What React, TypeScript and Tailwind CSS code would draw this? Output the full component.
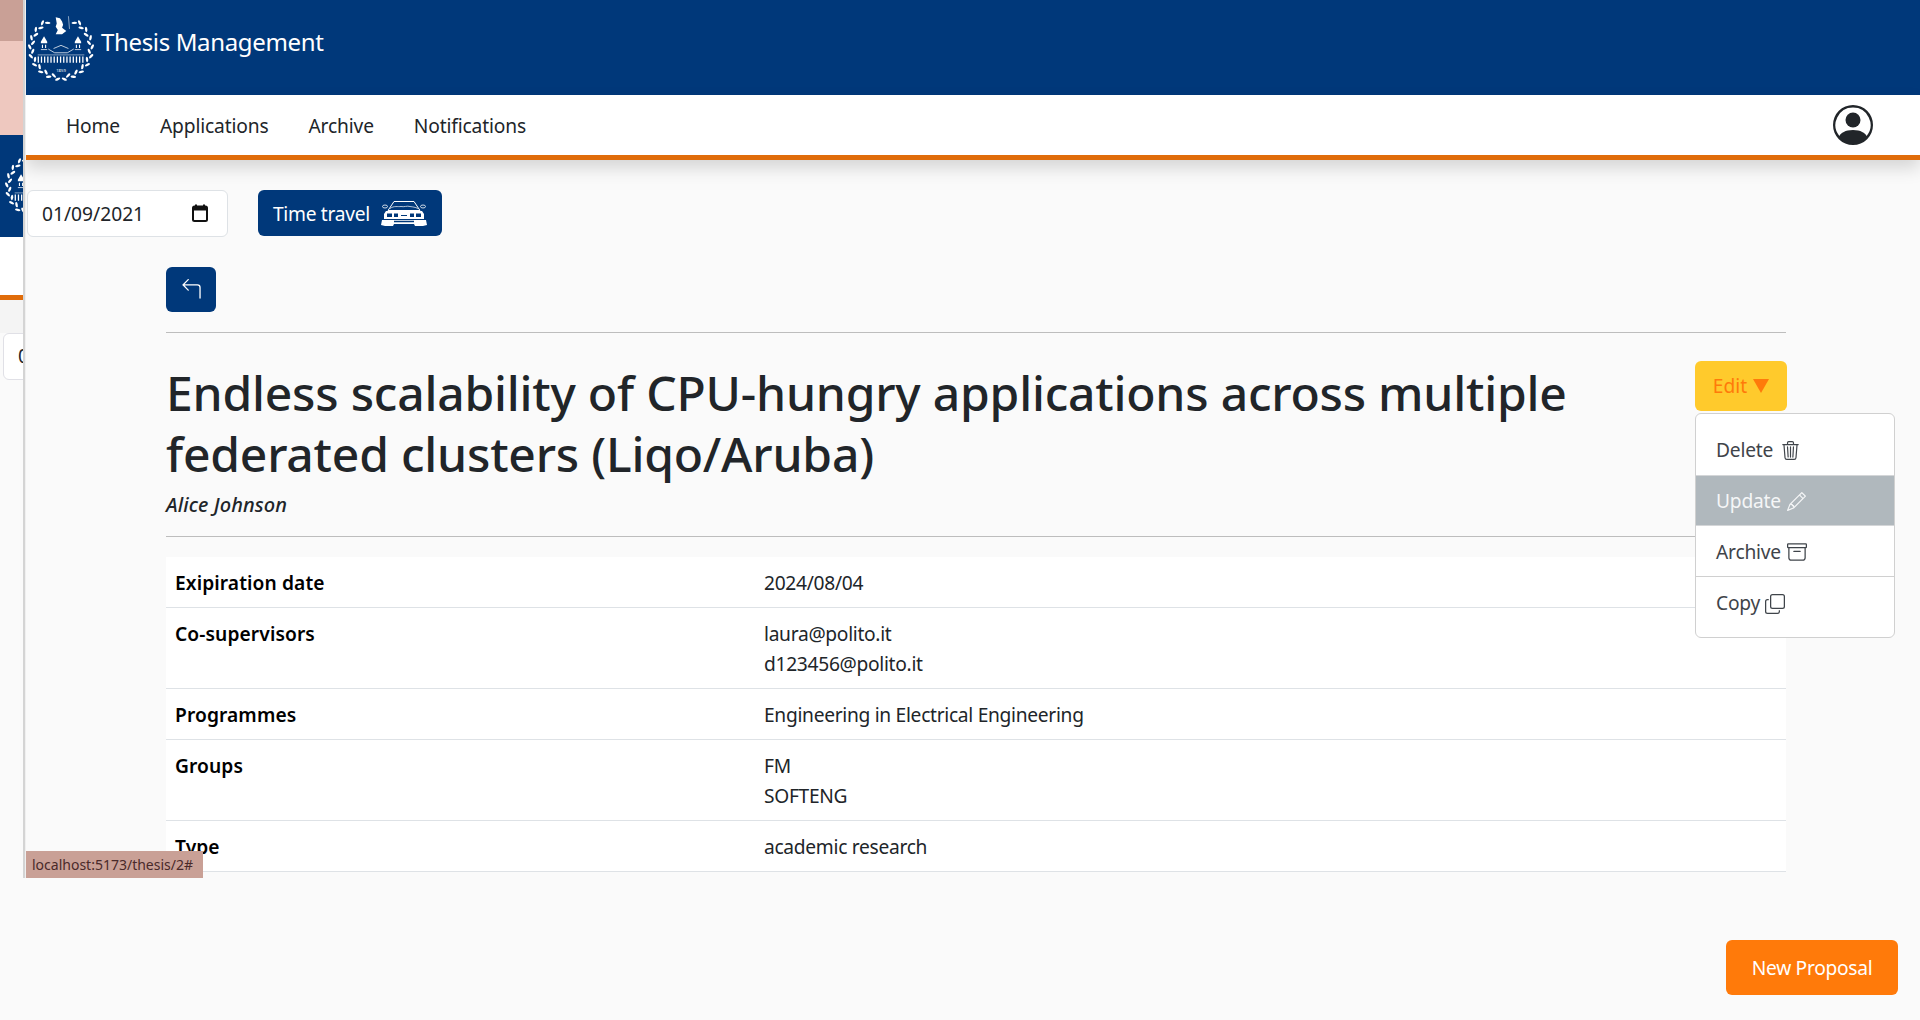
import React from 'react';
import { BsArchive, BsArrow90DegLeft, BsCopy, BsPencil, BsPersonCircle, BsTrash3 } from 'react-icons/bs';

const font = { fontFamily: '"Noto Sans", "Open Sans", sans-serif' };

// wreath leaves: two branches from the bottom up to either side of the head
const wreath = [-1, 1].flatMap((side) =>
  Array.from({ length: 18 }, (_, i) => {
    const deg = 174 - i * 8.6;
    const a = (deg * Math.PI) / 180;
    const r = i % 2 === 0 ? 29.5 : 26.8;
    const x = 32 + side * r * Math.sin(a);
    const y = 33 - r * Math.cos(a);
    return { x, y, rot: side * (deg + (i % 2 === 0 ? 30 : -30)) };
  })
);

const Logo: React.FC = () => (
  <svg width="70" height="70" viewBox="0 0 64 66" className="shrink-0" fill="#fff">
    {wreath.map((l, i) => (
      <ellipse key={i} cx={l.x} cy={l.y} rx="2.600" ry="1.150" transform={`rotate(${l.rot} ${l.x} ${l.y})`} />
    ))}
    <path d="M27 4l4 1 2 3 1 3-1 3 4 3-4 3h-6l2-4-2-3 1-3z" />
    <path d="M39 3l1 12" stroke="#fff" strokeWidth=".5" />
    <path d="M13 27l3-5 3 5v1.500h-6zM45 27l3-5 3 5v1.500h-6z" />
    <path d="M14 30h1v3h-1zM17 30h1v3h-1zM46 30h1v3h-1zM49 30h1v3h-1z" />
    <path d="M13 34.500h6M45 34.500h6M20 34l6 3.500h12l6-3.500M25 33.500l7-3 7 3" stroke="#fff" strokeWidth=".7" fill="none" />
    <path d="M10 39.500h44" stroke="#fff" strokeWidth=".6" opacity=".8" />
    <path d="M10 41h1.200v6H10zM13 41h1.200v6H13zM16 41h1.200v6H16zM19 41h1.200v6H19zM22 41h1.200v6H22zM25 41h1.200v6H25zM28 41h1.200v6H28zM31 41h1.200v6H31zM34 41h1.200v6H34zM37 41h1.200v6H37zM40 41h1.200v6H40zM43 41h1.200v6H43zM46 41h1.200v6H46zM49 41h1.200v6H49zM52 41h1.200v6H52z" />
    <text x="32" y="55.500" fontSize="4" textAnchor="middle" fontFamily="Noto Sans, sans-serif">1859</text>
  </svg>
);

const Car: React.FC = () => (
  <svg width="46" height="28" viewBox="0 0 46 28" className="shrink-0" fill="none" stroke="#fff" strokeWidth="1">
    <path d="M13 1.500h20l6 9H7z" />
    <path d="M9 8.500c4-3 8-1.500 11-2 3 .8 6-1 9 0 3 .5 5 .5 8 2" strokeWidth=".7" />
    <ellipse cx="4" cy="6.500" rx="2.500" ry="1.500" strokeWidth=".8" />
    <ellipse cx="42" cy="6.500" rx="2.500" ry="1.500" strokeWidth=".8" />
    <path d="M5 11h36l2 3v5H3v-5z" fill="#fff" stroke="none" />
    <path d="M6 13.500h5v3.500H6zM13 13.500h4v3.500h-4zM29 13.500h4v3.500h-4zM35 13.500h5v3.500h-5z" fill="#00387a" stroke="none" />
    <path d="M20 15h6v1h-6z" fill="#00387a" stroke="none" />
    <path d="M1 20h44l1 5-4 1H34l-1-2H13l-1 2H4l-4-1z" fill="#fff" stroke="none" />
    <path d="M13 21.500h20" stroke="#00387a" strokeWidth="1.500" />
  </svg>
);

const CalendarIcon: React.FC = () => (
  <svg width="16" height="18" viewBox="0 0 16 18" fill="none" className="shrink-0 -mt-[3px]">
    <rect x="1" y="2.500" width="14" height="14.500" rx="1.500" stroke="#111" strokeWidth="2" />
    <path d="M1 3h14v3.500H1z" fill="#111" />
    <path d="M4 0.500v3M12 0.500v3" stroke="#111" strokeWidth="2" />
  </svg>
);

const rows: { label: string; values: string[] }[] = [
  { label: 'Exipiration date', values: ['2024/08/04'] },
  { label: 'Co-supervisors', values: ['laura@polito.it', 'd123456@polito.it'] },
  { label: 'Programmes', values: ['Engineering in Electrical Engineering'] },
  { label: 'Groups', values: ['FM', 'SOFTENG'] },
  { label: 'Type', values: ['academic research'] },
];

const menu = [
  { label: 'Delete', icon: <BsTrash3 size={19} />, gap: 'gap-[8px]' },
  { label: 'Update', icon: <BsPencil size={19} />, gap: 'gap-[6px]', active: true },
  { label: 'Archive', icon: <BsArchive size={20} />, gap: 'gap-[6px]' },
  { label: 'Copy', icon: <BsCopy size={20} />, gap: 'gap-[5px]' },
];

const BehindWindow: React.FC = () => (
  <div className="w-[23px] shrink-0 h-[878px] flex flex-col overflow-hidden">
    <div className="h-[41px] bg-[#c9a096]" />
    <div className="h-[94px] bg-[#eec8bf]" />
    <div className="h-[102px] bg-[#00387a] overflow-hidden pl-[3px] pt-[16px]">
      <div className="w-[70px]">
        <Logo />
      </div>
    </div>
    <div className="h-[58px] bg-white" />
    <div className="h-[5px] bg-[#e06c0a]" />
    <div className="h-[33px] bg-[#f4f4f4]" />
    <div className="pl-[3px]">
      <div className="w-[60px] h-[47px] rounded-md border border-[#e0e0e6] bg-white pl-[14px] pt-[8px] text-[19px] text-[#212529]">0</div>
    </div>
  </div>
);

const App: React.FC = () => {
  return (
    <div style={font} className="relative w-[1920px] h-[1020px] overflow-hidden bg-[#fafafa] text-[#212529] flex">
      <BehindWindow />
      <div className="w-[3px] h-[878px] bg-[#d4d4d4] border-r border-[#f0f0f0] shrink-0" />

      {/* Window */}
      <div className="w-[1894px] h-[878px] overflow-hidden flex flex-col">
        <header className="h-[95px] bg-[#00387a] flex items-center shrink-0">
          <Logo />
          <span className="ml-[5px] mb-[11px] text-[24px] text-white tracking-[-0.35px]">Thesis Management</span>
        </header>
        <nav className="h-[65px] bg-white border-b-[5px] border-[#e06c0a] shadow-[0_8px_16px_rgba(0,0,0,0.15)] flex items-center pl-[40px] pr-[47px] pt-[2px] text-[19.2px] shrink-0 relative">
          <a className="tracking-[-0.15px]">Home</a>
          <a className="ml-[40px] tracking-[-0.15px]">Applications</a>
          <a className="ml-[40px] tracking-[-0.15px]">Archive</a>
          <a className="ml-[40px] tracking-[-0.15px]">Notifications</a>
          <BsPersonCircle size={40} className="ml-auto text-[#212529] -translate-y-[1px]" />
        </nav>

        <div className="flex items-start pt-[30px] pl-[1px] shrink-0">
          <div className="w-[201px] h-[47px] rounded-md border border-[#dee2e6] bg-white flex items-center justify-between pl-[14px] pr-[19px] pt-[2px] text-[19.2px]">
            <span>01/09/2021</span>
            <CalendarIcon />
          </div>
          <button className="ml-[30px] w-[184px] h-[46px] rounded-md bg-[#00387a] text-white text-[19.2px] tracking-[-0.3px] flex items-center pl-[15px] pt-[2px] gap-[11px]">
            <span>Time travel</span>
            <Car />
          </button>
        </div>

        <div className="pl-[140px] pr-[134px] shrink-0">
          <button className="mt-[30px] w-[50px] h-[45px] rounded-md bg-[#00387a] text-white flex items-center justify-center">
            <BsArrow90DegLeft size={21} />
          </button>
          <div className="mt-[20px] border-t border-[#bdbdbd]" />
          <div className="flex justify-between pt-[30px]">
            <h1 className="w-[1480px] text-[48px] leading-[60.500px] font-medium tracking-[-0.2px]">
              Endless scalability of CPU-hungry applications across multiple federated clusters (Liqo/Aruba)
            </h1>
            <button className="w-[92px] h-[50px] rounded-md bg-[#ffca2c] text-[#ff7a0a] text-[19.2px] flex items-center justify-center gap-[6px] shrink-0 -mt-[2px] translate-x-[1px]">
              Edit
              <svg width="16" height="14" viewBox="0 0 16 14" fill="#ff7a0a">
                <path d="M0 0h16L8 14z" />
              </svg>
            </button>
          </div>
          <p className="mt-[6px] text-[20px] italic font-medium tracking-[0.1px]">Alice Johnson</p>
          <div className="mt-[16px] border-t border-[#bdbdbd]" />
          <div className="mt-[20px] bg-white text-[19.2px] tracking-[-0.3px]">
            {rows.map((r) => (
              <div key={r.label} className="grid grid-cols-[589px_1fr] border-b border-[#dee2e6] pl-[9px] pt-[11px] pb-[9px] leading-[30px]">
                <div className="font-semibold text-black tracking-[0.1px]">{r.label}</div>
                <div>
                  {r.values.map((v) => (
                    <div key={v}>{v}</div>
                  ))}
                </div>
              </div>
            ))}
          </div>
        </div>
      </div>

      {/* Edit dropdown */}
      <div className="absolute left-[1695px] top-[413px] w-[200px] h-[225px] rounded-md border border-[#d0d0d0] bg-white pt-[10px] text-[19.2px] tracking-[-0.2px] text-[#3f444a]">
        {menu.map((m, i) => (
          <div
            key={m.label}
            className={`h-[51px] flex items-center pl-[20px] pt-[2px] ${m.gap} ${m.active ? 'bg-[#b0b8bd] text-[#f5f6f7] border-y border-[#d4d6d8]' : ''} ${i === 2 ? 'border-b border-[#d0d0d0]' : ''}`}
          >
            <span>{m.label}</span>
            {m.icon}
          </div>
        ))}
      </div>

      {/* Link preview */}
      <div className="absolute left-[26px] top-[851px] w-[177px] h-[27px] bg-[#c9a096] text-[#4a2a2a] text-[14px] pl-[6px] leading-[27px] whitespace-nowrap">
        localhost:5173/thesis/2#
      </div>

      <button className="absolute left-[1726px] top-[940px] w-[172px] h-[55px] rounded-md bg-[#ff7a0a] text-white text-[19.2px] tracking-[-0.3px] pt-[2px]">
        New Proposal
      </button>
    </div>
  );
};

export default App;
